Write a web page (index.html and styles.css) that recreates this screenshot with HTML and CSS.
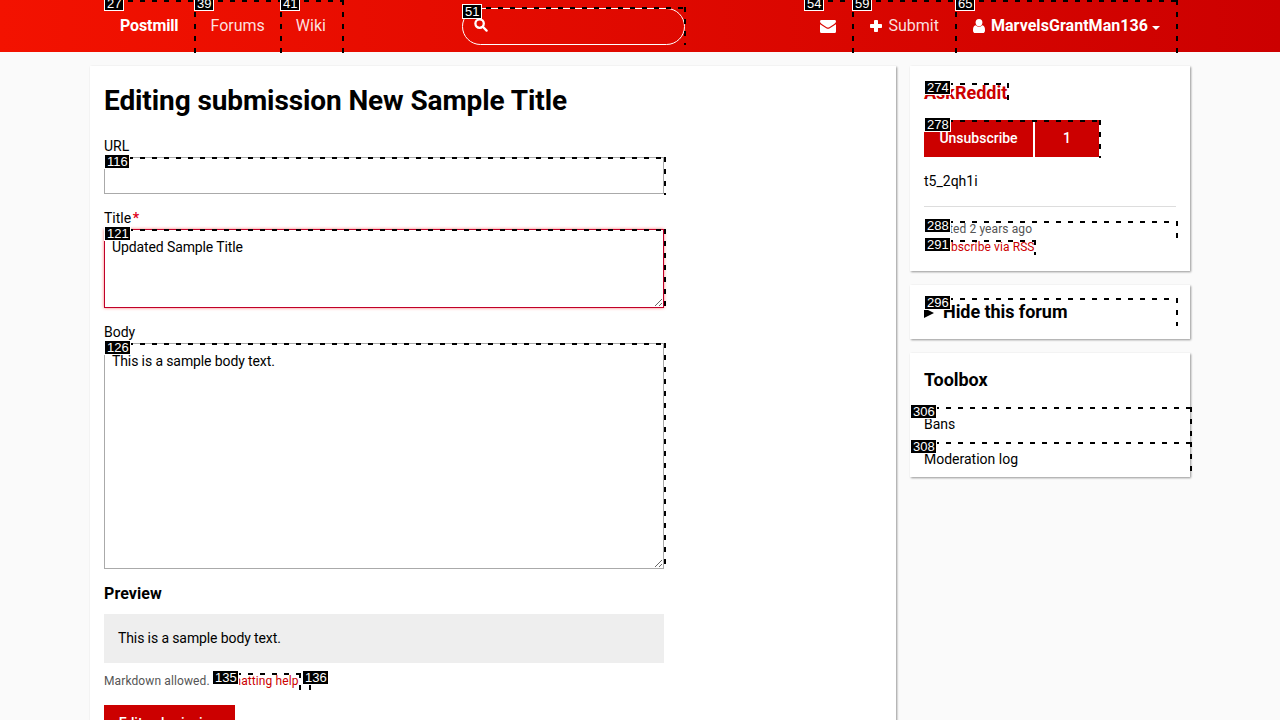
FILE: index.html
```html
<!DOCTYPE html>
<html lang="en">
<head>
<meta charset="utf-8">
<title>Editing submission New Sample Title</title>
<link rel="stylesheet" href="styles.css">
</head>
<body>
<header class="site-nav">
  <div class="site-nav-inner">
    <nav class="nav-links">
      <a class="nav-link brand">Postmill</a>
      <a class="nav-link forums">Forums</a>
      <a class="nav-link">Wiki</a>
    </nav>
    <div class="search">
      <svg class="search-icon" viewBox="0 0 14 14"><circle cx="5.6" cy="5.6" r="4.2"/><path d="M8.8 8.8L12.6 12.6"/></svg>
    </div>
    <nav class="nav-links user-links">
      <a class="nav-link mail"><svg width="16" height="13" viewBox="0 0 16 13"><path d="M0 1.4Q0 0 1.4 0H14.6Q16 0 16 1.4Q16 2.8 14.2 4L9.3 7.2Q8 8 6.7 7.2L1.8 4Q0 2.8 0 1.4ZM0 4.2L6.2 8.3Q8 9.3 9.8 8.3L16 4.2V11.5Q16 13 14.6 13H1.4Q0 13 0 11.5Z"/></svg></a>
      <a class="nav-link submit-link"><svg class="plus" width="12" height="12" viewBox="0 0 12 12"><path d="M5 0H7.2Q8 0 8 .8V4H11.2Q12 4 12 4.8V7.2Q12 8 11.2 8H8V11.2Q8 12 7.2 12H4.8Q4 12 4 11.2V8H.8Q0 8 0 7.2V4.8Q0 4 .8 4H4V.8Q4 0 5 0Z"/></svg>Submit</a>
      <a class="nav-link user"><svg class="person" width="12" height="14" viewBox="0 0 12 14"><ellipse cx="6" cy="3.6" rx="3.4" ry="3.6"/><path d="M2.7 6.3Q6 9.4 9.3 6.3Q12 6.6 12 11.2Q12 14 9.8 14H2.2Q0 14 0 11.2Q0 6.6 2.7 6.3Z"/></svg>MarvelsGrantMan136<span class="caret"></span></a>
    </nav>
  </div>
</header>
<div class="layout">
  <main class="card main-card">
    <h1>Editing submission New Sample Title</h1>
    <form class="form">
      <label>URL</label>
      <input class="field url-field" type="text">
      <label>Title <b class="required">*</b></label>
      <textarea class="field title-field">Updated Sample Title</textarea>
      <label>Body</label>
      <textarea class="field body-field">This is a sample body text.</textarea>
      <h3>Preview</h3>
      <div class="preview">This is a sample body text.</div>
      <p class="hint">Markdown allowed. <a>Formatting help</a></p>
      <button class="submit" type="button">Edit submission</button>
    </form>
  </main>
  <aside class="sidebar">
    <section class="card forum-card">
      <h2 class="forum-name">AskReddit</h2>
      <div class="subscribe"><span class="sub-action">Unsubscribe</span><span class="sub-count">1</span></div>
      <p class="forum-desc">t5_2qh1i</p>
      <p class="created">Created 2 years ago</p>
      <p class="rss">Subscribe via RSS</p>
    </section>
    <section class="card hide-card">
      <svg width="10" height="10" viewBox="0 0 10 10"><path d="M0 0L10 5L0 10Z"/></svg><h2>Hide this forum</h2>
    </section>
    <section class="card toolbox">
      <h2>Toolbox</h2>
      <a>Bans</a>
      <a>Moderation log</a>
    </section>
  </aside>
</div>
<div class="marks">
  <div class="mark m27"><span>27</span></div>
  <div class="mark m39"><span>39</span></div>
  <div class="mark m41"><span>41</span></div>
  <div class="mark m51"><span>51</span></div>
  <div class="mark m54"><span>54</span></div>
  <div class="mark m59"><span>59</span></div>
  <div class="mark m65"><span>65</span></div>
  <div class="mark m116"><span>116</span></div>
  <div class="mark m121"><span>121</span></div>
  <div class="mark m126"><span>126</span></div>
  <div class="mark m135"><span>135</span></div>
  <div class="mark m136"><span>136</span></div>
  <div class="mark m274"><span>274</span></div>
  <div class="mark m278"><span>278</span></div>
  <div class="mark m288"><span>288</span></div>
  <div class="mark m291"><span>291</span></div>
  <div class="mark m296"><span>296</span></div>
  <div class="mark m306"><span>306</span></div>
  <div class="mark m308"><span>308</span></div>
</div>
</body>
</html>
```
FILE: styles.css
```css
* { box-sizing: border-box; }
html { overflow: hidden; }
body { margin: 0; height: 720px; overflow: hidden; background: #fafafa; color: #000; font: 14px/21px Roboto, sans-serif; }
h1, h2, h3, p { margin: 0; }
svg { fill: currentColor; flex: none; }

.site-nav { height: 52px; background: linear-gradient(to right, #f31200, #c00); color: rgba(255,255,255,.88); font-size: 16px; line-height: 24px; }
.site-nav-inner { width: 1100px; height: 52px; margin: 0 auto; padding: 0 14px; display: grid; grid-template-columns: 358px 223px 1fr; }
.nav-links { display: flex; }
.nav-link { display: flex; align-items: center; padding: 0 16px; }
.brand, .user { font-weight: 700; color: #fff; }
.brand { letter-spacing: -.12px; }
.forums { padding-right: 15px; }
.user-links { justify-content: flex-end; }
.user { letter-spacing: .05px; }
.mail { color: #fff; }
.submit-link { padding: 0 18px; }
.plus { color: #fff; margin-right: 6px; }
.person { margin-right: 6px; }
.caret { border: 4px solid transparent; border-top-color: #fff; border-bottom: 0; margin: 3px 0 0 4px; }
.search { height: 37px; margin-top: 8px; border: 1px solid #fff; border-radius: 19px; padding: 9px 11px; }
.search-icon { display: block; width: 14px; height: 14px; fill: none; stroke: #fff; stroke-width: 2.3; stroke-linecap: round; }

.layout { width: 1100px; margin: 14px auto 0; display: grid; grid-template-columns: 806px 280px; gap: 14px; align-items: start; }
.card { background: #fff; box-shadow: 1px 1px 2px rgba(0,0,0,.4); }
.main-card { padding: 14px; height: 720px; }
h1 { font-size: 28px; line-height: 42px; letter-spacing: -.1px; }
.form { width: 560px; margin-top: 14px; display: flex; flex-direction: column; }
label { height: 21px; }
.required { color: #e00020; margin-left: -2px; }
.field { display: block; width: 560px; margin: 0 0 14px; padding: 7px; border: 1px solid #aaa; border-radius: 0; background: #fff; color: #000; font: 14px/21px Roboto, sans-serif; letter-spacing: -.11px; outline: 0; }
.url-field { height: 37px; }
.title-field { height: 79px; border-color: #c00028; box-shadow: 0 0 3px #f008; }
.body-field { height: 226px; }
h3 { font-size: 16px; line-height: 21px; letter-spacing: .08px; }
.preview { margin-top: 10px; height: 49px; padding: 14px; background: #eee; letter-spacing: -.11px; }
.hint { margin-top: 9px; font-size: 12px; line-height: 18px; color: #555; letter-spacing: .11px; }
.hint a, .rss { color: #c00; }
.submit { align-self: flex-start; width: 131px; height: 37px; margin-top: 15px; padding: 0 2px 0 0; border: 0; background: #c00; color: #fff; font: 500 14px/21px Roboto, sans-serif; }

.sidebar { display: flex; flex-direction: column; gap: 14px; }
h2 { font-size: 18px; line-height: 27px; letter-spacing: -.06px; }
.forum-card { height: 205px; padding: 13px 14px; }
.forum-name { color: #c00; letter-spacing: 0; }
.subscribe { display: flex; gap: 2px; height: 37px; margin-top: 14px; color: #fff; font-weight: 500; line-height: 36px; text-align: center; }
.sub-action { width: 109px; background: #c00; }
.sub-count { width: 64px; background: #c00; }
.forum-desc { margin-top: 14px; padding-bottom: 14px; border-bottom: 1px solid #ddd; }
.created, .rss { font-size: 12px; line-height: 18px; letter-spacing: .1px; }
.created { margin-top: 13px; color: #555; }
.rss { padding-left: 13px; }
.hide-card { height: 54px; padding: 0 14px; display: flex; align-items: center; gap: 9px; }
.hide-card svg { margin-top: 2px; }
.hide-card h2 { padding-bottom: 2px; }
.toolbox { height: 124px; padding-top: 13px; display: flex; flex-direction: column; }
.toolbox h2 { padding: 0 14px; margin-bottom: 14px; }
.toolbox a { height: 35px; padding: 7px 14px; }

.marks { position: absolute; inset: 0; overflow: hidden; pointer-events: none; }
.mark { position: absolute; background: repeating-linear-gradient(to right, #000 0 5px, transparent 5px 12px) top / 100% 2px no-repeat, repeating-linear-gradient(to bottom, #000 0 5px, transparent 5px 12px) right / 2px 100% no-repeat; }
.mark span { position: absolute; left: 0; top: -3px; height: 15px; padding: 0 1.3px 0 2px; border: 1px solid #fff; background: #000; color: #fff; font: 13px/13px "Liberation Sans", sans-serif; }
.m27 { left: 104px; top: 0; width: 92px; height: 53px; }
.m39 { left: 194px; top: 0; width: 88px; height: 53px; }
.m41 { left: 280px; top: 0; width: 64px; height: 53px; }
.m51 { left: 462px; top: 7px; width: 224px; height: 38px; }
.m54 { left: 804px; top: 0; width: 50px; height: 53px; }
.m59 { left: 852px; top: 0; width: 105px; height: 53px; }
.m65 { left: 955px; top: 0; width: 223px; height: 53px; }
.m27 span, .m39 span, .m41 span, .m54 span, .m59 span, .m65 span { top: -4px; padding-right: 2px; }
.m116 { left: 104px; top: 157px; width: 562px; height: 38px; }
.m121 { left: 104px; top: 229px; width: 562px; height: 80px; }
.m126 { left: 104px; top: 343px; width: 562px; height: 227px; }
.m135 { left: 212px; top: 673px; width: 89px; height: 17px; }
.m136 { left: 302px; top: 673px; width: 9px; height: 17px; }
.m274 { left: 924px; top: 83px; width: 85px; height: 18px; }
.m278 { left: 924px; top: 120px; width: 177px; height: 38px; }
.m288 { left: 924px; top: 221px; width: 254px; height: 19px; }
.m291 { left: 924px; top: 240px; width: 112px; height: 15px; }
.m296 { left: 924px; top: 298px; width: 254px; height: 28px; }
.m306 { left: 910px; top: 407px; width: 282px; height: 36px; }
.m308 { left: 910px; top: 442px; width: 282px; height: 29px; }
```
